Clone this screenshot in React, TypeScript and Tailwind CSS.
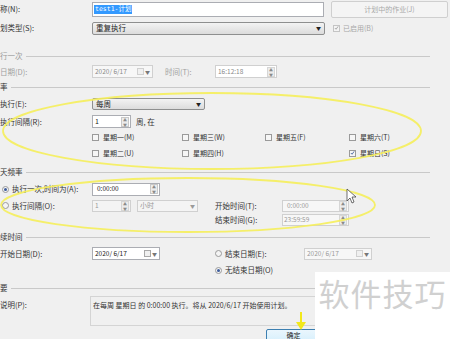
import React from "react";

const font = { fontFamily: '"Noto Sans CJK SC", "Liberation Sans", sans-serif' };

function Check({ checked = false, disabled = false }: { checked?: boolean; disabled?: boolean }) {
  return (
    <span
      className={`inline-flex items-center justify-center w-[7px] h-[7px] border ${
        disabled ? "border-[#c4c4c4] bg-[#f4f4f4]" : "border-[#9a9a9a] bg-[#f6f6f6]"
      }`}
    >
      {checked && (
        <svg width="6" height="6" viewBox="0 0 6 6">
          <path d="M1 3 L2.5 4.5 L5 1" stroke={disabled ? "#9a9a9a" : "#3c5a9a"} strokeWidth="1" fill="none" />
        </svg>
      )}
    </span>
  );
}

function Radio({ checked = false }: { checked?: boolean }) {
  return (
    <span className="inline-flex items-center justify-center w-[7px] h-[7px] rounded-full border border-[#9a9a9a] bg-[#f4f4f4]">
      {checked && <span className="w-[3px] h-[3px] rounded-full bg-[#3d5c9c]" />}
    </span>
  );
}

function Spin({ disabled = false }: { disabled?: boolean }) {
  return (
    <span className={`flex flex-col w-[8px] h-[10px] border ${disabled ? "border-[#d6d6d6]" : "border-[#c8c8c8]"} bg-[#ececec] text-[4px] leading-[5px] text-center text-[#8a8a8a]`}>
      <span>▲</span>
      <span>▼</span>
    </span>
  );
}

function CalIcon({ disabled = false }: { disabled?: boolean }) {
  return (
    <span className="flex items-center gap-[1px]">
      <span className={`w-[7px] h-[7px] border ${disabled ? "border-[#d0d0d0]" : "border-[#a8a8a8]"} bg-[#f0f0f0]`} />
      <span className="text-[5px] text-[#777]">▼</span>
    </span>
  );
}

function Section({ title, muted = false }: { title: string; muted?: boolean }) {
  return (
    <div className="flex items-center h-[16px] w-[430px]">
      <span className={`text-[7.5px] pr-[3px] ${muted ? "text-[#9a9a9a]" : "text-[#333]"}`}>{title}</span>
      <span className="flex-1 h-px bg-[#c9c9c9]" />
    </div>
  );
}

function Label({ text, muted = false, w = "w-[92px]" }: { text: string; muted?: boolean; w?: string }) {
  return <span className={`${w} shrink-0 text-[7.5px] ${muted ? "text-[#a0a0a0]" : "text-[#333]"}`}>{text}</span>;
}

export default function App() {
  return (
    <div className="relative w-[450px] h-[339px] overflow-hidden bg-[#f0f0f0]" style={font}>
      <div className="flex flex-col">
        {/* name */}
        <div className="flex items-center h-[18px]">
          <Label text="称(N):" />
          <div className="w-[232px] h-[15px] border border-[#abadb3] bg-white flex items-center px-[1px]">
            <span className="bg-[#3399ff] text-white text-[6.5px] leading-[9px] px-[1px]" style={{ fontFamily: '"DejaVu Sans Mono", "Noto Sans CJK SC", monospace' }}>
              test1-计划
            </span>
          </div>
          <div className="ml-[7px] w-[117px] h-[17px] border border-[#cfcfcf] bg-[#f4f4f4] rounded-[2px] flex items-center justify-center text-[7px] text-[#a8a8a8]">
            计划中的作业(J)
          </div>
        </div>

        {/* type */}
        <div className="flex items-center h-[20px]">
          <Label text="划类型(S):" />
          <div className="w-[233px] h-[13px] border border-[#8e8f8f] rounded-[2px] bg-gradient-to-b from-[#f3f3f3] to-[#dcdcdc] flex items-center justify-between px-[3px]">
            <span className="text-[7.5px] text-[#222]">重复执行</span>
            <span className="text-[5px] text-[#222]">▼</span>
          </div>
          <div className="ml-[8px] flex items-center gap-[3px]">
            <Check checked disabled />
            <span className="text-[7px] text-[#a8a8a8]">已启用(B)</span>
          </div>
        </div>

        <div className="h-[10px]" />
        <Section title="行一次" muted />

        {/* once date */}
        <div className="flex items-center h-[15px]">
          <Label text="日期(D):" muted />
          <div className="w-[61px] h-[13px] border border-[#d0d0d0] bg-[#f7f7f7] flex items-center justify-between px-[2px]">
            <span className="text-[6.5px] text-[#8a8a8a]">2020/ 6/17</span>
            <CalIcon disabled />
          </div>
          <Label text="时间(T):" muted w="w-[50px] ml-[12px]" />
          <div className="w-[62px] h-[13px] border border-[#d0d0d0] bg-white flex items-center justify-between pl-[2px] pr-[1px]">
            <span className="text-[6.5px] text-[#8a8a8a]">16:12:18</span>
            <Spin disabled />
          </div>
        </div>

        <Section title="率" />

        {/* weekly */}
        <div className="flex items-center h-[18px]">
          <Label text="执行(E):" />
          <div className="w-[113px] h-[12px] border border-[#8e8f8f] rounded-[2px] bg-gradient-to-b from-[#f3f3f3] to-[#dcdcdc] flex items-center justify-between px-[3px]">
            <span className="text-[7.5px] text-[#222]">每周</span>
            <span className="text-[5px] text-[#222]">▼</span>
          </div>
        </div>
        <div className="flex items-center h-[17px]">
          <Label text="执行间隔(R):" />
          <div className="w-[39px] h-[13px] border border-[#abadb3] bg-white flex items-center justify-between pl-[2px] pr-[1px]">
            <span className="text-[7px] text-[#222]">1</span>
            <Spin />
          </div>
          <span className="ml-[5px] text-[7.5px] text-[#333]">周, 在</span>
        </div>
        <div className="flex items-center h-[15px] pl-[92px]">
          <span className="w-[90px] flex items-center gap-[4px]"><Check /><span className="text-[7px] text-[#333]">星期一(M)</span></span>
          <span className="w-[83px] flex items-center gap-[4px]"><Check /><span className="text-[7px] text-[#333]">星期三(W)</span></span>
          <span className="w-[84px] flex items-center gap-[4px]"><Check /><span className="text-[7px] text-[#333]">星期五(F)</span></span>
          <span className="flex items-center gap-[4px]"><Check /><span className="text-[7px] text-[#333]">星期六(T)</span></span>
        </div>
        <div className="flex items-center h-[16px] pl-[92px]">
          <span className="w-[90px] flex items-center gap-[4px]"><Check /><span className="text-[7px] text-[#333]">星期二(U)</span></span>
          <span className="w-[167px] flex items-center gap-[4px]"><Check /><span className="text-[7px] text-[#333]">星期四(H)</span></span>
          <span className="flex items-center gap-[4px]"><Check checked /><span className="text-[7px] text-[#333]">星期日(S)</span></span>
        </div>

        <div className="h-[3px]" />
        <Section title="天频率" />

        {/* daily */}
        <div className="flex items-center h-[18px]">
          <span className="w-[92px] flex items-center gap-[3px] pl-[2px]">
            <Radio checked />
            <span className="text-[7.5px] text-[#333]">执行一次,时间为(A):</span>
          </span>
          <div className="w-[68px] h-[13px] border border-[#abadb3] bg-white flex items-center justify-between pl-[4px] pr-[1px]">
            <span className="text-[6.5px] text-[#222]">0:00:00</span>
            <Spin />
          </div>
        </div>
        <div className="flex items-center h-[15px]">
          <span className="w-[92px] flex items-center gap-[3px] pl-[2px]">
            <Radio />
            <span className="text-[7.5px] text-[#333]">执行间隔(O):</span>
          </span>
          <div className="w-[39px] h-[12px] border border-[#d0d0d0] bg-[#f4f4f4] flex items-center justify-between pl-[2px] pr-[1px]">
            <span className="text-[6.5px] text-[#9a9a9a]">1</span>
            <Spin disabled />
          </div>
          <div className="ml-[6px] w-[61px] h-[12px] border border-[#d0d0d0] bg-[#f4f4f4] flex items-center justify-between px-[2px]">
            <span className="text-[7px] text-[#9a9a9a]">小时</span>
            <span className="text-[5px] text-[#9a9a9a]">▼</span>
          </div>
          <Label text="开始时间(T):" w="w-[67px] ml-[17px]" />
          <div className="w-[67px] h-[12px] border border-[#d0d0d0] bg-[#f7f7f7] flex items-center justify-between pl-[4px] pr-[1px]">
            <span className="text-[6.5px] text-[#9a9a9a]">0:00:00</span>
            <Spin disabled />
          </div>
        </div>
        <div className="flex items-center h-[14px] pl-[215px]">
          <Label text="结束时间(G):" w="w-[67px]" />
          <div className="w-[67px] h-[12px] border border-[#d0d0d0] bg-[#f7f7f7] flex items-center justify-between pl-[1px] pr-[1px]">
            <span className="text-[6.5px] text-[#9a9a9a]">23:59:59</span>
            <Spin disabled />
          </div>
        </div>

        <div className="h-[2px]" />
        <Section title="续时间" />

        {/* duration */}
        <div className="flex items-center h-[17px]">
          <Label text="开始日期(D):" />
          <div className="w-[68px] h-[13px] border border-[#abadb3] bg-white flex items-center justify-between px-[2px]">
            <span className="text-[6.5px] text-[#222]">2020/ 6/17</span>
            <CalIcon />
          </div>
          <span className="ml-[55px] w-[89px] flex items-center gap-[3px]">
            <Radio />
            <span className="text-[7.5px] text-[#333]">结束日期(E):</span>
          </span>
          <div className="w-[68px] h-[12px] border border-[#d0d0d0] bg-[#f7f7f7] flex items-center justify-between px-[2px]">
            <span className="text-[6.5px] text-[#9a9a9a]">2020/ 6/17</span>
            <CalIcon disabled />
          </div>
        </div>
        <div className="flex items-center h-[16px] pl-[215px]">
          <span className="flex items-center gap-[3px]">
            <Radio checked />
            <span className="text-[7.5px] text-[#333]">无结束日期(O)</span>
          </span>
        </div>

        <div className="h-[2px]" />
        <Section title="要" />

        {/* summary */}
        <div className="flex items-start h-[33px]">
          <Label text="说明(P):" w="w-[90px] pt-[3px]" />
          <div className="w-[300px] h-[30px] border border-[#d4d4d4] px-[2px] pt-[3px] text-[7px] text-[#333] whitespace-nowrap">
            在每周 星期日 的 0:00:00 执行。将从 2020/6/17 开始使用计划。
          </div>
        </div>
        <div className="flex h-[12px] pl-[266px]">
          <div className="w-[55px] h-[12px] border border-[#3c7fb1] rounded-[2px] bg-gradient-to-b from-[#eaf6fd] to-[#d9f0fc] flex items-start justify-center text-[7px] text-[#222]">
            确定
          </div>
        </div>
      </div>

      {/* watermark */}
      <div className="absolute left-[315px] top-[272px] w-[135px] h-[67px] bg-white flex items-center justify-center">
        <span className="text-[31px] text-[#d0d0d0] tracking-[1px] -mt-[24px]">软件技巧</span>
      </div>
      <div className="absolute left-[266px] top-[329px] w-[49px] h-[10px]" />

      {/* annotations */}
      <svg className="absolute inset-0 pointer-events-none" width="450" height="339">
        <ellipse cx="212" cy="131" rx="209" ry="38" fill="none" stroke="#f5ee5a" strokeWidth="1.8" opacity="0.9" />
        <ellipse cx="188" cy="205" rx="187" ry="27" fill="none" stroke="#f5ee5a" strokeWidth="1.8" opacity="0.9" />
        <path d="M301 312 L301 323" stroke="#f2e81a" strokeWidth="2" />
        <path d="M296 322 L306 322 L301 330 Z" fill="#f2e81a" />
        <path d="M347 189 L347 201 L350 198 L352 203 L354 202 L352 197 L356 197 Z" fill="#fff" stroke="#333" strokeWidth="0.7" />
      </svg>
    </div>
  );
}
